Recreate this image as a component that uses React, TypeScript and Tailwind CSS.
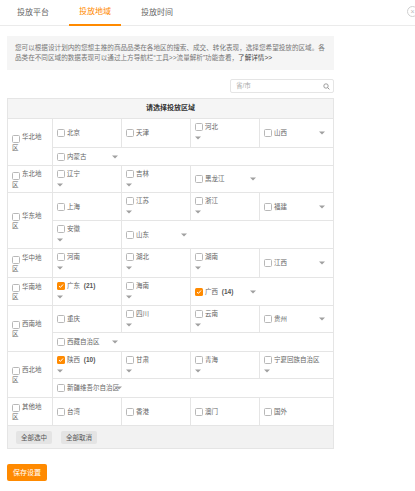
import React from "react";

type Prov = {
  name: string;
  count?: string;
  checked?: boolean;
  arrow?: "below" | "right";
};

type SubRow = { h: string; cells: Prov[] };
type Region = { name: string; rows: SubRow[] };

const regions: Region[] = [
  {
    name: "华北地区",
    rows: [
      {
        h: "h-[28px]",
        cells: [
          { name: "北京" },
          { name: "天津" },
          { name: "河北", arrow: "below" },
          { name: "山西", arrow: "right" },
        ],
      },
      { h: "h-[18px]", cells: [{ name: "内蒙古", arrow: "right" }] },
    ],
  },
  {
    name: "东北地区",
    rows: [
      {
        h: "h-[26px]",
        cells: [
          { name: "辽宁", arrow: "below" },
          { name: "吉林", arrow: "below" },
          { name: "黑龙江", arrow: "right" },
        ],
      },
    ],
  },
  {
    name: "华东地区",
    rows: [
      {
        h: "h-[27px]",
        cells: [
          { name: "上海" },
          { name: "江苏", arrow: "below" },
          { name: "浙江", arrow: "below" },
          { name: "福建", arrow: "right" },
        ],
      },
      {
        h: "h-[28px]",
        cells: [
          { name: "安徽", arrow: "below" },
          { name: "山东", arrow: "right" },
        ],
      },
    ],
  },
  {
    name: "华中地区",
    rows: [
      {
        h: "h-[28px]",
        cells: [
          { name: "河南", arrow: "below" },
          { name: "湖北", arrow: "below" },
          { name: "湖南", arrow: "below" },
          { name: "江西", arrow: "right" },
        ],
      },
    ],
  },
  {
    name: "华南地区",
    rows: [
      {
        h: "h-[27px]",
        cells: [
          { name: "广东", count: "(21)", checked: true, arrow: "below" },
          { name: "海南", arrow: "below" },
          { name: "广西", count: "(14)", checked: true, arrow: "right" },
        ],
      },
    ],
  },
  {
    name: "西南地区",
    rows: [
      {
        h: "h-[26px]",
        cells: [
          { name: "重庆" },
          { name: "四川", arrow: "below" },
          { name: "云南", arrow: "below" },
          { name: "贵州", arrow: "right" },
        ],
      },
      { h: "h-[19px]", cells: [{ name: "西藏自治区", arrow: "right" }] },
    ],
  },
  {
    name: "西北地区",
    rows: [
      {
        h: "h-[26px]",
        cells: [
          { name: "陕西", count: "(10)", checked: true, arrow: "below" },
          { name: "甘肃", arrow: "below" },
          { name: "青海", arrow: "below" },
          { name: "宁夏回族自治区", arrow: "below" },
        ],
      },
      { h: "h-[19px]", cells: [{ name: "新疆维吾尔自治区", arrow: "right" }] },
    ],
  },
  {
    name: "其他地区",
    rows: [
      {
        h: "h-[27px]",
        cells: [
          { name: "台湾" },
          { name: "香港" },
          { name: "澳门" },
          { name: "国外" },
        ],
      },
    ],
  },
];

const Box = ({ checked }: { checked?: boolean }) =>
  checked ? (
    <span className="inline-flex w-[8px] h-[8px] shrink-0 items-center justify-center rounded-[1.5px] bg-[#ff8a00] align-middle">
      <svg width="6" height="6" viewBox="0 0 6 6">
        <path d="M1 3.1 L2.4 4.4 L5 1.5" stroke="#fff" strokeWidth="1" fill="none" />
      </svg>
    </span>
  ) : (
    <span className="inline-block w-[8px] h-[8px] shrink-0 rounded-[1.5px] border border-[#b8b8b8] bg-white align-middle" />
  );

const Arrow = () => (
  <svg width="6" height="4" viewBox="0 0 6 4" className="block shrink-0">
    <path d="M0 0.5 H6 L3 3.5 Z" fill="#a0a0a0" />
  </svg>
);

const Label = ({ p }: { p: Prov }) => (
  <span className="flex h-[10px] items-center gap-[2px] whitespace-nowrap">
    <Box checked={p.checked} />
    <span>{p.name}</span>
    {p.count && <span className="font-bold text-[#555]">&nbsp;{p.count}</span>}
  </span>
);

function ProvCell({ p, last }: { p: Prov; last: boolean }) {
  const line = last ? "" : "border-r border-[#e5e5e5]";
  if (p.arrow === "below") {
    return (
      <div className={`flex flex-col pl-[4px] pt-[3px] ${line}`}>
        <Label p={p} />
        <span className="mt-[4px]">
          <Arrow />
        </span>
      </div>
    );
  }
  if (p.arrow === "right") {
    return (
      <div className={`flex items-center pl-[4px] ${line}`}>
        <span className="min-w-[52px]">
          <Label p={p} />
        </span>
        <span className="ml-[3px]">
          <Arrow />
        </span>
      </div>
    );
  }
  return (
    <div className={`flex items-center pl-[4px] ${line}`}>
      <Label p={p} />
    </div>
  );
}

export default function App() {
  return (
    <div className="relative w-[415px] h-[491px] bg-white font-['Liberation_Sans','Noto_Sans_CJK_SC',sans-serif] text-[#666]">
      {/* Tabs */}
      <div className="flex h-[26px] gap-[10px] border-b border-[#ebebeb] pl-[7px]">
        <div className="flex items-center px-[10px] text-[8px] text-[#666]">投放平台</div>
        <div className="-mb-px flex items-center border-b-2 border-[#ff8a00] px-[10px] text-[8px] text-[#ff8a00]">
          投放地域
        </div>
        <div className="flex items-center px-[10px] text-[8px] text-[#666]">投放时间</div>
      </div>
      <div className="absolute right-[-3px] top-[6px] flex h-[11px] w-[11px] items-center justify-center rounded-full border border-[#d0d0d0] text-[7px] leading-none text-[#bbb]">
        ×
      </div>

      <div className="px-[7px]">
        {/* Info */}
        <div className="mt-[10px] w-[327px] bg-[#f5f5f5] px-[8px] py-[7px] text-[6.6px] leading-[10px] text-[#777]">
          <div className="whitespace-nowrap">
            您可以根据设计划内的您想主推的商品品类在各地区的搜索、成交、转化表现，选择您希望投放的区域。各
          </div>
          <div className="whitespace-nowrap">
            品类在不同区域的数据表现可以通过上方导航栏“工具&gt;&gt;流量解析”功能查看，
            <span className="text-[#444]">了解详情&gt;&gt;</span>
          </div>
        </div>

        {/* Search */}
        <div className="mt-[9px] flex w-[327px] justify-end">
          <div className="flex h-[14px] w-[104px] items-center justify-between rounded-[2px] border border-[#e5e5e5] pl-[5px] pr-[3px]">
            <span className="text-[6.5px] text-[#aaa]">省/市</span>
            <svg width="7" height="7" viewBox="0 0 7 7">
              <circle cx="3" cy="3" r="2.2" stroke="#888" strokeWidth="0.8" fill="none" />
              <path d="M4.6 4.6 L6.4 6.4" stroke="#888" strokeWidth="0.9" />
            </svg>
          </div>
        </div>

        {/* Table */}
        <div className="mt-[5px] w-[327px] border border-[#e5e5e5] text-[6.5px] text-[#666]">
          <div className="flex h-[19px] items-center justify-center bg-[#f5f5f5] text-[7px] font-bold text-[#333]">
            请选择投放区域
          </div>
          {regions.map((r) => (
            <div key={r.name} className="flex border-t border-[#e5e5e5]">
              <div className="flex w-[45px] items-center border-r border-[#e5e5e5] pl-[4px] pr-[5px]">
                <div className="leading-[9px]">
                  <span className="mr-[2px] inline-block align-[-1px]">
                    <Box />
                  </span>
                  {r.name}
                </div>
              </div>
              <div className="flex flex-col">
                {r.rows.map((row, i) => (
                  <div
                    key={i}
                    className={`grid grid-cols-[69px_69px_69px_73px] ${row.h} ${
                      i > 0 ? "border-t border-[#e5e5e5]" : ""
                    }`}
                  >
                    {row.cells.map((c, j) => (
                      <ProvCell key={c.name} p={c} last={j === row.cells.length - 1} />
                    ))}
                  </div>
                ))}
              </div>
            </div>
          ))}
          <div className="flex h-[23px] items-center gap-[9px] border-t border-[#e5e5e5] bg-[#f2f2f2] pl-[8px]">
            <button className="h-[13px] rounded-[2px] bg-[#e4e4e4] px-[5px] text-[6.5px] leading-[13px] text-[#555]">
              全部选中
            </button>
            <button className="h-[13px] rounded-[2px] bg-[#e4e4e4] px-[5px] text-[6.5px] leading-[13px] text-[#555]">
              全部取消
            </button>
          </div>
        </div>

        {/* Save */}
        <button className="mt-[15px] h-[17px] rounded-[2px] bg-[#ff8a00] px-[6px] text-[7px] leading-[17px] text-white">
          保存设置
        </button>
      </div>
    </div>
  );
}
